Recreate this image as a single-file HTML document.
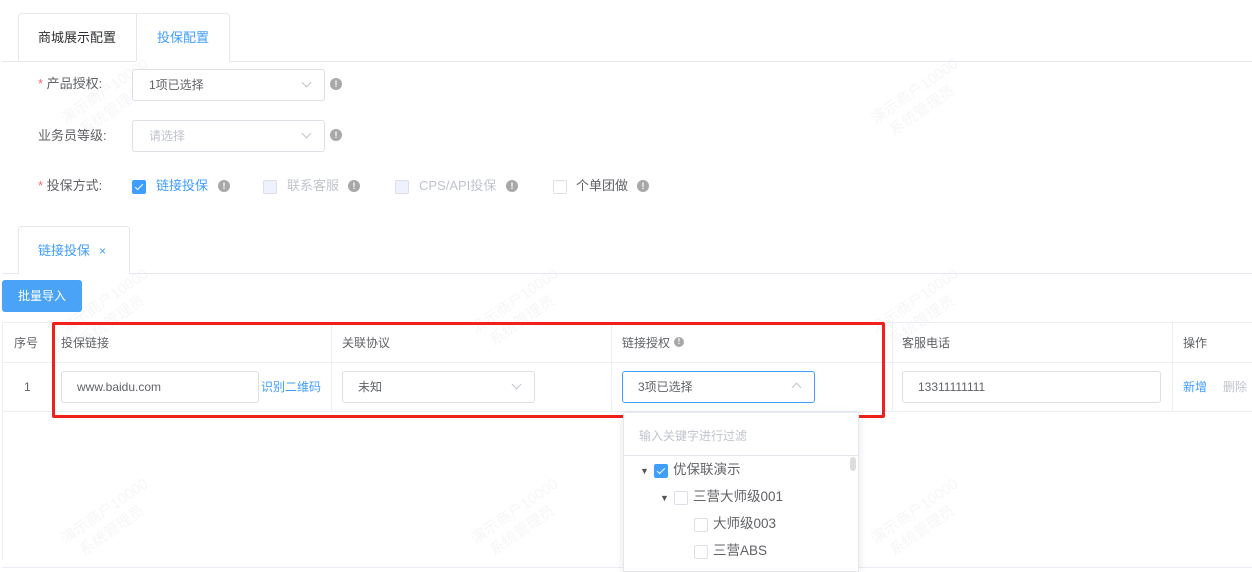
<!DOCTYPE html>
<html><head><meta charset="utf-8"><style>
*{box-sizing:border-box;margin:0;padding:0}
body{width:1252px;height:569px;overflow:hidden;background:#fff;font-family:"Liberation Sans","Noto Sans CJK SC",sans-serif;font-size:13px;color:#606266;position:relative}
.a{position:absolute}
.t{position:absolute;white-space:nowrap;line-height:16px}
.box{position:absolute;border:1px solid #dcdfe6;border-radius:3px;background:#fff}
.info{position:absolute;width:12px;height:12px;border-radius:50%;background:#a8a8a8;color:#fff;font-size:9px;font-weight:bold;text-align:center;line-height:12px}
.cb{position:absolute;width:14px;height:14px;border:1px solid #dcdfe6;border-radius:2px;background:#fff}
.cb.dis{background:#edf2fc}
.cb.on{background:#409eff;border-color:#409eff}
.cb.on:after{content:"";position:absolute;left:4px;top:1px;width:3px;height:7px;border:solid #fff;border-width:0 1px 1px 0;transform:rotate(45deg)}
.arrow{position:absolute;width:7px;height:7px;border:solid #c0c4cc;border-width:0 1px 1px 0;transform:rotate(45deg)}
.wm{position:absolute;color:rgba(0,0,0,0.04);font-size:15px;transform:rotate(-35deg);line-height:20px;white-space:nowrap}
.star{color:#f56c6c}
</style></head><body>
<!-- watermarks -->
<div class="wm" style="left:60px;top:80px">演示商户10000<br>&nbsp;&nbsp;系统管理员</div>
<div class="wm" style="left:870px;top:80px">演示商户10000<br>&nbsp;&nbsp;系统管理员</div>
<div class="wm" style="left:60px;top:290px">演示商户10000<br>&nbsp;&nbsp;系统管理员</div>
<div class="wm" style="left:470px;top:290px">演示商户10000<br>&nbsp;&nbsp;系统管理员</div>
<div class="wm" style="left:870px;top:290px">演示商户10000<br>&nbsp;&nbsp;系统管理员</div>
<div class="wm" style="left:60px;top:500px">演示商户10000<br>&nbsp;&nbsp;系统管理员</div>
<div class="wm" style="left:470px;top:500px">演示商户10000<br>&nbsp;&nbsp;系统管理员</div>
<div class="wm" style="left:870px;top:500px">演示商户10000<br>&nbsp;&nbsp;系统管理员</div>
<!-- top tabs -->
<div class="a" style="left:18px;top:13px;width:212px;height:49px;border:1px solid #e4e7ed;border-bottom:none;border-radius:4px 4px 0 0"></div>
<div class="a" style="left:136px;top:13px;width:1px;height:48px;background:#e4e7ed"></div>
<div class="a" style="left:2px;top:61px;width:134px;height:1px;background:#e4e7ed"></div>
<div class="a" style="left:230px;top:61px;width:1022px;height:1px;background:#e4e7ed"></div>
<div class="t" style="left:38px;top:30px;color:#303133">商城展示配置</div>
<div class="t" style="left:157px;top:30px;color:#409eff">投保配置</div>
<!-- form -->
<div class="t" style="left:38px;top:76px;color:#606266"><span class="star">*</span> 产品授权:</div>
<div class="box" style="left:132px;top:69px;width:193px;height:32px"></div>
<div class="t" style="left:149px;top:77px;font-size:12px;color:#606266">1项已选择</div>
<div class="arrow" style="left:303px;top:79px"></div>
<div class="info" style="left:330px;top:78px">!</div>
<div class="t" style="left:38px;top:128px">业务员等级:</div>
<div class="box" style="left:132px;top:120px;width:193px;height:32px"></div>
<div class="t" style="left:149px;top:128px;font-size:12px;color:#c0c4cc">请选择</div>
<div class="arrow" style="left:303px;top:130px"></div>
<div class="info" style="left:330px;top:129px">!</div>
<div class="t" style="left:38px;top:178px"><span class="star">*</span> 投保方式:</div>
<div class="cb on" style="left:132px;top:180px"></div>
<div class="t" style="left:156px;top:178px;color:#409eff">链接投保</div>
<div class="info" style="left:218px;top:180px">!</div>
<div class="cb dis" style="left:263px;top:180px"></div>
<div class="t" style="left:287px;top:178px;color:#c0c4cc">联系客服</div>
<div class="info" style="left:348px;top:180px">!</div>
<div class="cb dis" style="left:395px;top:180px"></div>
<div class="t" style="left:419px;top:178px;color:#c0c4cc">CPS/API投保</div>
<div class="info" style="left:506px;top:180px">!</div>
<div class="cb" style="left:553px;top:180px"></div>
<div class="t" style="left:576px;top:178px;color:#606266">个单团做</div>
<div class="info" style="left:637px;top:180px">!</div>
<!-- second tab -->
<div class="a" style="left:18px;top:226px;width:112px;height:48px;border:1px solid #e4e7ed;border-bottom:none;border-radius:4px 4px 0 0"></div>
<div class="a" style="left:2px;top:273px;width:16px;height:1px;background:#e4e7ed"></div>
<div class="a" style="left:130px;top:273px;width:1122px;height:1px;background:#e4e7ed"></div>
<div class="t" style="left:38px;top:243px;color:#409eff">链接投保</div>
<div class="t" style="left:99px;top:243px;color:#409eff;font-size:12px">×</div>
<div class="a" style="left:2px;top:280px;width:80px;height:32px;background:#4aa3f7;border-radius:3px;color:#fff;font-size:12px;line-height:32px;text-align:center">批量导入</div>
<!-- table -->
<div class="a" style="left:2px;top:322px;width:1250px;height:1px;background:#ebeef5"></div>
<div class="a" style="left:2px;top:362px;width:1250px;height:1px;background:#ebeef5"></div>
<div class="a" style="left:2px;top:411px;width:1250px;height:1px;background:#ebeef5"></div>
<div class="a" style="left:2px;top:322px;width:1px;height:238px;background:#ebeef5"></div>
<div class="a" style="left:2px;top:567px;width:1250px;height:1px;background:#ebeef5"></div>
<div class="a" style="left:53px;top:322px;width:1px;height:89px;background:#ebeef5"></div>
<div class="a" style="left:331px;top:322px;width:1px;height:89px;background:#ebeef5"></div>
<div class="a" style="left:611px;top:322px;width:1px;height:89px;background:#ebeef5"></div>
<div class="a" style="left:892px;top:322px;width:1px;height:89px;background:#ebeef5"></div>
<div class="a" style="left:1172px;top:322px;width:1px;height:89px;background:#ebeef5"></div>
<div class="t" style="left:14px;top:335px;font-size:12px;color:#606266">序号</div>
<div class="t" style="left:61px;top:335px;font-size:12px">投保链接</div>
<div class="t" style="left:342px;top:335px;font-size:12px">关联协议</div>
<div class="t" style="left:622px;top:335px;font-size:12px">链接授权</div>
<div class="info" style="left:674px;top:337px;width:10px;height:10px;line-height:10px;font-size:8px">!</div>
<div class="t" style="left:902px;top:335px;font-size:12px">客服电话</div>
<div class="t" style="left:1183px;top:335px;font-size:12px">操作</div>
<div class="t" style="left:24px;top:379px;font-size:12px">1</div>
<div class="box" style="left:61px;top:371px;width:198px;height:32px"></div>
<div class="t" style="left:77px;top:379px;font-size:12px">www.baidu.com</div>
<div class="t" style="left:261px;top:379px;font-size:12px;color:#409eff">识别二维码</div>
<div class="box" style="left:342px;top:371px;width:193px;height:32px"></div>
<div class="t" style="left:358px;top:379px;font-size:12px">未知</div>
<div class="arrow" style="left:513px;top:381px"></div>
<div class="box" style="left:622px;top:371px;width:193px;height:32px;border-color:#409eff"></div>
<div class="t" style="left:638px;top:379px;font-size:12px">3项已选择</div>
<div class="arrow" style="left:793px;top:384px;transform:rotate(225deg)"></div>
<div class="box" style="left:902px;top:371px;width:259px;height:32px"></div>
<div class="t" style="left:918px;top:379px;font-size:12px">13311111111</div>
<div class="t" style="left:1183px;top:379px;font-size:12px;color:#409eff">新增</div>
<div class="t" style="left:1223px;top:379px;font-size:12px;color:#c0c4cc">删除</div>
<!-- red box -->
<div class="a" style="left:52px;top:322px;width:833px;height:96px;border:3px solid #f0201a;border-radius:2px"></div>
<!-- dropdown -->
<div class="a" style="left:623px;top:412px;width:236px;height:160px;background:#fff;border:1px solid #e4e7ed;box-shadow:0 2px 8px rgba(0,0,0,0.1)"></div>
<div class="a" style="left:624px;top:455px;width:234px;height:1px;background:#e4e7ed"></div>
<div class="t" style="left:639px;top:428px;font-size:12px;color:#c0c4cc">输入关键字进行过滤</div>
<div class="a" style="left:850px;top:457px;width:6px;height:14px;background:#ddd;border-radius:3px"></div>
<div class="t" style="left:640px;top:463px;font-size:9px;color:#555">▼</div>
<div class="cb on" style="left:654px;top:464px"></div>
<div class="t" style="left:673px;top:462px;font-size:13.5px;color:#606266">优保联演示</div>
<div class="t" style="left:660px;top:490px;font-size:9px;color:#555">▼</div>
<div class="cb" style="left:674px;top:491px"></div>
<div class="t" style="left:693px;top:489px;font-size:13.5px">三营大师级001</div>
<div class="cb" style="left:694px;top:518px"></div>
<div class="t" style="left:713px;top:516px;font-size:13.5px">大师级003</div>
<div class="cb" style="left:694px;top:545px"></div>
<div class="t" style="left:713px;top:543px;font-size:13.5px">三营ABS</div>
</body></html>
